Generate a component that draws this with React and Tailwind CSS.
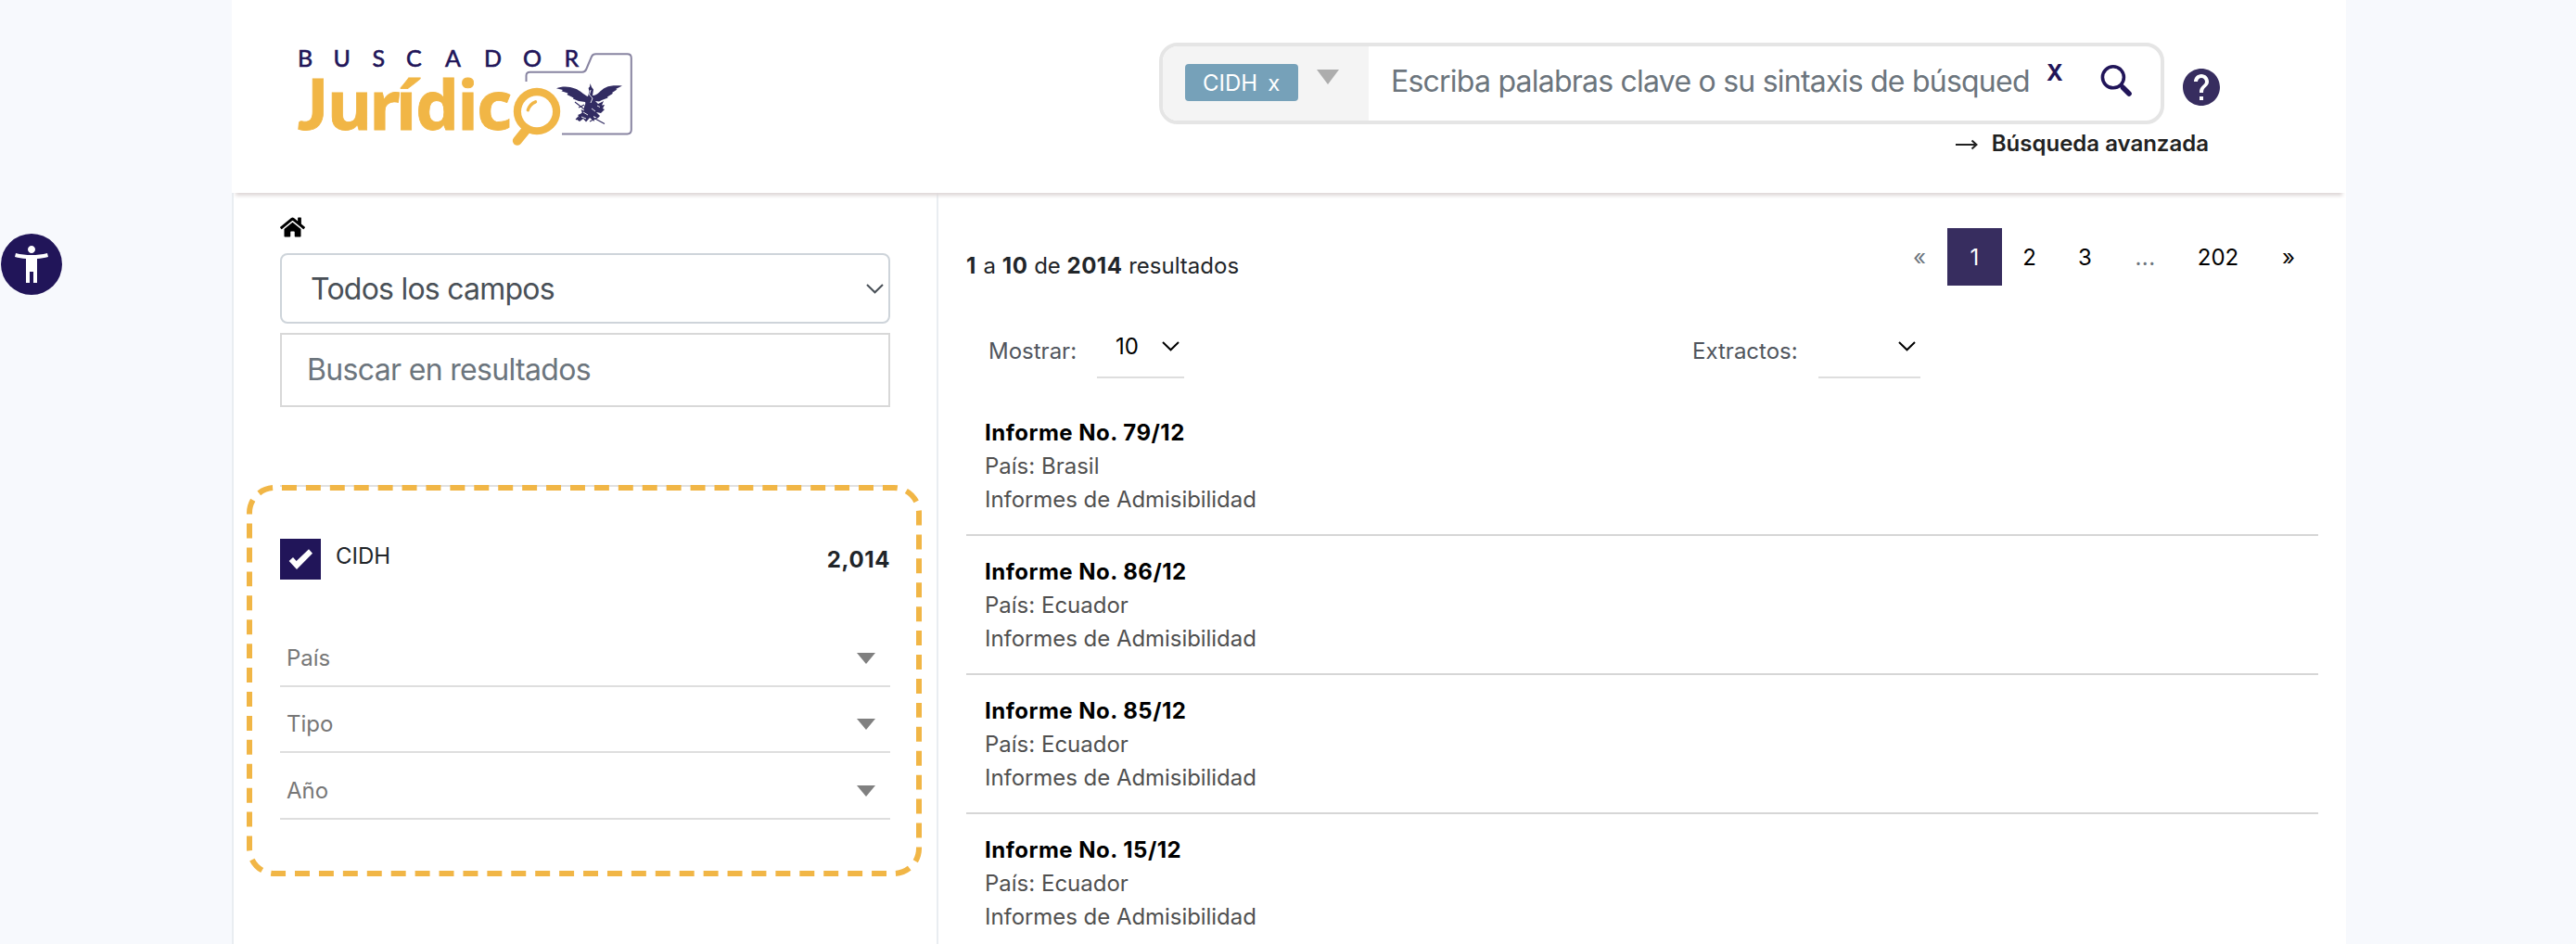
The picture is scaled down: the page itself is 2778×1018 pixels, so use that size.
import React from "react";
import { FaHome } from "react-icons/fa";
import { MdHelp, MdAccessibilityNew } from "react-icons/md";

const results = [
  { title: "Informe No. 79/12", country: "Brasil" },
  { title: "Informe No. 86/12", country: "Ecuador" },
  { title: "Informe No. 85/12", country: "Ecuador" },
  { title: "Informe No. 15/12", country: "Ecuador" },
];

const filters = [
  { label: "País", height: "h-[74px]" },
  { label: "Tipo", height: "h-[71px]" },
  { label: "Año", height: "h-[72px]" },
];

function Logo() {
  return (
    <svg className="mt-12 h-28 w-[368px] shrink-0" viewBox="318 48 368 112">
      <text
        x="321 359.5 401.5 438 480 522 564 608.5"
        y="71.5"
        fontFamily="Lato, sans-serif"
        fontSize="25"
        fill="#211559"
        stroke="#211559"
        strokeWidth="0.6"
      >
        BUSCADOR
      </text>
      <text y="139.5" fontWeight="700" fill="#f1b646" stroke="#f1b646" strokeWidth="0.8">
        <tspan x="321" fontFamily="Lato, sans-serif" fontSize="76" fontWeight="900">J</tspan>
        <tspan x="353 398.5 427 448 493.5 514" fontFamily="'Noto Sans', sans-serif" fontSize="74">urídic</tspan>
      </text>
      <g fill="none" stroke="#8884a1" strokeWidth="2">
        <path d="M567.5 88V81.5Q567.5 77.7 571.5 77.7H628Q631 77.7 632.3 74.5L638 61Q639.3 58.3 642.5 58.3H676.5Q680.8 58.3 680.8 62.5V140Q680.8 144.4 676.5 144.4H606" />
      </g>
      <circle cx="579" cy="120" r="25.2" fill="#f1b646" />
      <path d="M569 138L557.8 151.8" stroke="#f1b646" strokeWidth="10" strokeLinecap="round" />
      <circle cx="579" cy="120.3" r="17" fill="#fff" />
      <path d="M569.3 118.7Q571.5 112 577.5 109.8" fill="none" stroke="#f1b646" strokeWidth="3.4" strokeLinecap="round" />
      <g fill="#322c62">
        <path d="M600 95.3C606 92.6 614 92.9 620 95.5C626 97.5 629 102 634 104L635.5 98.5L634.6 95L636 93.5L636.5 90L638 94L640 96.5L639 103C645 103 647 97 653 94.5C658 92 664 92.2 671 92.5L664 96L665.5 96.4L660 100L661 100.8L655 104.5L655.5 105.6L649 108L646 109.5L642 109L641 113H632L631 110L624 109L618 106.5L618.5 105.5L611.5 102L612.5 100.5L605.5 98.2L607 97Z" />
        <path d="M633 108H641L645 112L651 109L649 113.5L652 113L650 117L652 118L648 122L643 121L647 125L644.5 127.5L640 125L641 131L636 127L632 131.5L629 128L625 131L621.5 128.5L625 126L623 124L628 122L626.5 118L630 119.5V115Z" />
      </g>
      <g fill="none" stroke="#322c62" strokeWidth="1.1">
        <path d="M620 110L629 117L640 127L652 133.5M624 116L630 113M621 129L631 119M636 131L644 127M646 120L640 115" />
      </g>
      <g fill="none" stroke="#fff" strokeWidth="0.9">
        <path d="M637 97L635.5 102L639 106L637 111M629 121L634 124M638 117L642 120M627 126L632 128M644 114L647 115.5" />
      </g>
    </svg>
  );
}

function Chevron({ color }) {
  return (
    <svg className="h-[11px] w-[19px] shrink-0" viewBox="0 0 19 11" fill="none" stroke={color} strokeWidth="2">
      <path d="M1 1L9.5 9.3L18 1" />
    </svg>
  );
}

function Header() {
  return (
    <header className="relative z-10 flex h-[208px] justify-between bg-white pl-[68px] shadow-[0_7px_4px_-4px_#ded7d7]">
      <Logo />
      <div className="mr-[132px] mt-[46px] flex flex-col">
        <div className="flex items-start">
          <div className="flex h-[88px] w-[1084px] overflow-hidden rounded-[20px] border-4 border-[#e5e5e5]">
            <div className="flex w-[222px] shrink-0 items-start bg-[#f4f4f4] pl-6 pt-[19px]">
              <div className="flex h-10 w-[122px] items-center rounded bg-[#76a1b9] pl-[19px] pt-px text-white">
                <span>CIDH</span>
                <span className="ml-[11px]">x</span>
              </div>
              <svg className="ml-5 mt-1.5 h-4 w-6" viewBox="0 0 24 16">
                <path d="M0 0H24L12 16Z" fill="#adadad" />
              </svg>
            </div>
            <div className="ml-6 flex h-[76px] w-[700px] shrink-0 items-center whitespace-nowrap text-[32px] tracking-[-0.77px] text-[#6c757d]">
              Escriba palabras clave o su sintaxis de búsqued
            </div>
            <div className="ml-[7px] mt-[11px] w-[18px] shrink-0 font-bold leading-[36px] text-[#211559]">X</div>
            <svg className="ml-10 mt-5 size-9 shrink-0" viewBox="2266 70 36 36" fill="none" stroke="#211559">
              <circle cx="2279.9" cy="83.3" r="11.5" strokeWidth="3.6" />
              <path d="M2287.5 91L2290 93.5" strokeWidth="4" />
              <path d="M2290.5 94.5L2297 101" strokeWidth="5.6" strokeLinecap="round" />
            </svg>
          </div>
          <MdHelp className="ml-4 mt-6 size-12 text-[#372d5f]" />
        </div>
        <a className="mr-4 mt-[3px] flex h-9 items-center justify-end font-semibold text-[#212121]">
          <svg className="mr-[15px] mt-0.5 h-3 w-6" viewBox="0 0 24 12" fill="none" stroke="#212121" strokeWidth="2">
            <path d="M0 6H22M17.5 1.5L22.5 6L17.5 10.5" />
          </svg>
          Búsqueda avanzada
        </a>
      </div>
    </header>
  );
}

function Sidebar() {
  return (
    <aside className="w-[762px] shrink-0 border-x-2 border-[#e9edf1] px-[50px] pt-[25px]">
      <FaHome className="h-6 w-[27px] text-black" />
      <div className="mt-4 flex h-[76px] items-center justify-between rounded-lg border-2 border-[#ced4da] pl-[31px] pr-[5px] text-[32px] tracking-[-0.77px] text-[#495057]">
        <span className="pt-[2px]">Todos los campos</span>
        <Chevron color="#495057" />
      </div>
      <div className="mt-2.5 flex h-20 items-center border-2 border-[#d8d8d8] pl-[27px] pt-px text-[32px] tracking-[-0.67px] text-[#6c757d]">
        Buscar en resultados
      </div>
      <section className="relative mt-[84px] border-t-2 border-[#e0e0e0]">
        <svg className="absolute -left-9 -top-0.5 h-[422px] w-[728px]" viewBox="266 523 728 422" fill="none">
          <rect
            x="269"
            y="526"
            width="722"
            height="416"
            rx="27"
            pathLength="2236"
            stroke="#f1b646"
            strokeWidth="6"
            strokeDasharray="16 10"
            strokeDashoffset="-8"
          />
        </svg>
        <div className="mt-14 flex h-11 items-start">
          <svg className="size-11 bg-[#211559]" viewBox="0 0 132 132">
            <path d="M29 72L42 60L53 72L93 34L105 47L54 99Z" fill="#fff" />
          </svg>
          <span className="ml-4 leading-[37px] text-[#212529]">CIDH</span>
          <span className="ml-auto font-bold leading-[45px] tracking-[0.6px] text-[#212529]">2,014</span>
        </div>
        <div className="mt-[42px]">
          {filters.map((f) => (
            <div key={f.label} className={`${f.height} flex items-end justify-between border-b-2 border-[#dedede] pl-[7px] pr-4`}>
              <div className="mb-[11px] flex h-9 items-center text-[#777]">{f.label}</div>
              <svg className="mb-[23px] h-3 w-5" viewBox="0 0 20 12">
                <path d="M0 0H20L10 12Z" fill="#808080" />
              </svg>
            </div>
          ))}
        </div>
      </section>
    </aside>
  );
}

function Pagination() {
  return (
    <nav className="mt-[38px] flex h-[62px] items-stretch text-center leading-[63px] text-black">
      <span className="w-[60px] text-[#6c757d]">«</span>
      <span className="h-[62px] w-[59px] bg-[#372d5f] text-white">1</span>
      <span className="w-[59px]">2</span>
      <span className="w-[61px]">3</span>
      <span className="w-[69px] tracking-[0.5px] text-[#6c757d]">...</span>
      <span className="w-[88px]">202</span>
      <span className="w-16">»</span>
    </nav>
  );
}

function Results() {
  return (
    <main className="flex-1 px-[30px]">
      <div className="flex items-start justify-between">
        <p className="mt-[61px] leading-9 text-[#212529]">
          <b className="tracking-[1.5px]">1</b> a <b className="tracking-[0.5px]">10</b> de <b className="tracking-[0.5px]">2014</b> resultados
        </p>
        <Pagination />
      </div>
      <div className="mt-[43px] flex h-[57px] text-[#50555d]">
        <span className="ml-6 w-[117px] pt-[9px] leading-[37px]">Mostrar:</span>
        <div className="flex w-[94px] items-start border-b-2 border-[#dedede] text-black">
          <span className="ml-5 mt-1 w-[49.5px] leading-[37px]">10</span>
          <span className="mt-[17px] flex"><Chevron color="#000" /></span>
        </div>
        <span className="ml-[548px] w-[136px] pt-[9px] leading-[37px]">Extractos:</span>
        <div className="flex w-[110px] items-start justify-end border-b-2 border-[#dedede] pr-[5px] pt-[17px]">
          <Chevron color="#000" />
        </div>
      </div>
      <ul className="mt-5">
        {results.map((r) => (
          <li key={r.title} className="h-[150px] border-b-2 border-[#d6d6d6] pl-5 pt-[21px] leading-9 text-[#505050]">
            <h3 className="font-bold tracking-[0.5px] text-black">{r.title}</h3>
            <p>País: {r.country}</p>
            <p className="tracking-[-0.05px]">Informes de Admisibilidad</p>
          </li>
        ))}
      </ul>
    </main>
  );
}

export default function App() {
  return (
    <div className="relative h-[1018px] w-[2778px] overflow-hidden bg-[#f7f9fd] font-['Inter',sans-serif] text-2xl">
      <div className="ml-[250px] flex h-full w-[2280px] flex-col bg-white">
        <Header />
        <div className="flex min-h-0 flex-1">
          <Sidebar />
          <Results />
        </div>
      </div>
      <button className="absolute left-px top-[252px] flex size-[66px] items-center justify-center rounded-full bg-[#211559]">
        <MdAccessibilityNew className="size-12 text-white" />
      </button>
    </div>
  );
}
